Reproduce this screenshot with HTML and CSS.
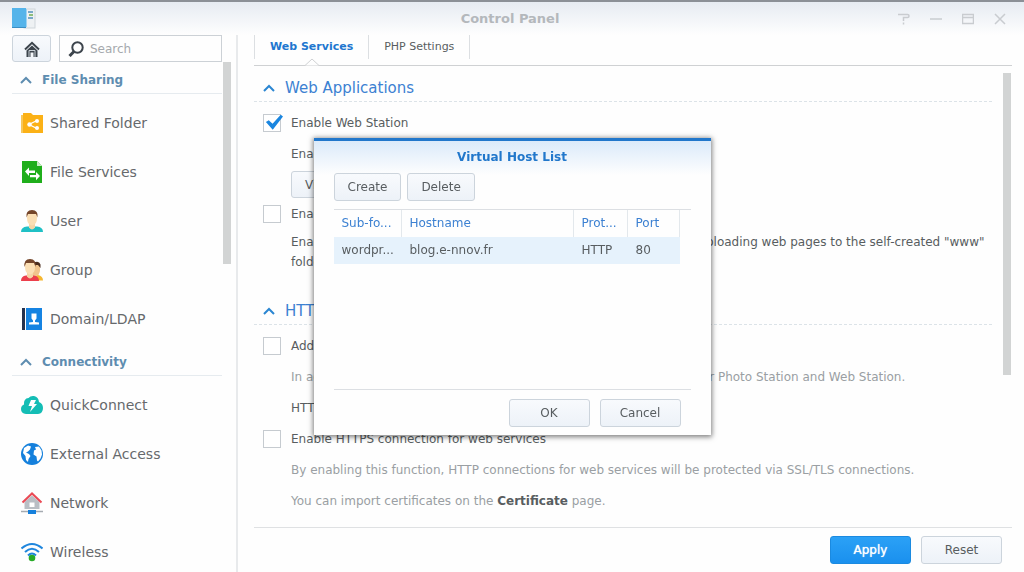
FILE: index.html
```html
<!doctype html>
<html lang="en">
<head>
<meta charset="utf-8">
<title>Control Panel</title>
<meta name="viewport" content="width=device-width, initial-scale=1">
<link rel="stylesheet" href="styles.css">
</head>
<body>

<header class="titlebar">
  <svg class="app-icon" width="24" height="22" viewBox="0 0 24 22">
    <rect x="12" y="1" width="11" height="19" fill="#eef1f3" stroke="#cfd5da"/>
    <rect x="0" y="0" width="14" height="20" fill="#55b4ea"/>
    <path d="M0 19.500h14" stroke="#3b8fc4"/>
    <path d="M14.500 1v18" stroke="#9fd3f2"/>
    <path d="M16 4h5M16 10h5" stroke="#7aa9c9" stroke-width="2"/>
    <path d="M17 7h4" stroke="#8fbf7a" stroke-width="2"/>
  </svg>
  <h1>Control Panel</h1>
  <div class="window-buttons">
    <button aria-label="Help"><svg width="12" height="12" viewBox="0 0 12 12"><path d="M0 1.500h9.500q1.500 0 1.500 1.500t-1.500 1.500H5.500V8M5.500 9.500v2"/></svg></button>
    <button aria-label="Minimize"><svg width="12" height="12" viewBox="0 0 12 12"><path d="M0 6h12"/></svg></button>
    <button aria-label="Maximize"><svg width="12" height="12" viewBox="0 0 12 12"><path d="M0 1.500h12M.5 1v9.500h11V1M1 4.500h10"/></svg></button>
    <button aria-label="Close"><svg width="12" height="12" viewBox="0 0 12 12"><path d="M1 1l10 10M11 1L1 11"/></svg></button>
  </div>
</header>

<div class="window">
  <aside class="sidebar">
    <div class="search-row">
      <button class="btn home" aria-label="Home">
        <svg width="16" height="16" viewBox="0 0 16 16">
          <path d="M1 8.500L8 1.800l7 6.700" fill="none" stroke="#3c444c" stroke-width="2"/>
          <path d="M2.500 9.500L8 4.500l5.500 5V16h-11z" fill="#3c444c"/>
          <path d="M5 16V9.500h6V16" fill="none" stroke="#c9d0d6"/>
          <path d="M6.500 16v-4.500h3V16z" fill="#f4f7fa"/>
        </svg>
      </button>
      <label class="search">
        <svg width="16" height="16" viewBox="0 0 16 16"><circle cx="9.500" cy="6.500" r="5.200" fill="none" stroke="#3c444c" stroke-width="2"/><path d="M6 10.500l-4.500 4.500" stroke="#3c444c" stroke-width="3"/></svg>
        <input type="text" placeholder="Search" aria-label="Search">
      </label>
    </div>

    <nav>
      <h2><svg class="chevron" width="12" height="8" viewBox="0 0 12 8"><path d="M1 7l5-5 5 5"/></svg>File Sharing</h2>
      <ul>
        <li><a href="#">
          <svg width="22" height="22" viewBox="0 0 22 22"><path d="M0 3h2v18H0z" fill="#f7c75b"/><path d="M2 1h8l2 2h10v18H2z" fill="#fbb116"/><path d="M16 8.500l-8 4 8 4" fill="none" stroke="#fff" stroke-width="1.300"/><circle cx="8.500" cy="12.500" r="2.200" fill="#fff"/><circle cx="16" cy="9" r="2" fill="#fff"/><circle cx="16" cy="16" r="2" fill="#fff"/></svg>
          Shared Folder</a></li>
        <li><a href="#">
          <svg width="22" height="22" viewBox="0 0 22 22"><path d="M1 0h15l5 5v17H1z" fill="#1fae1b"/><path d="M16 0v5h5z" fill="#c9edc6"/><path d="M4 10.500l4-4v3h6v2.500H8v3zM19 15l-4-4v3h-6v2.300h6v3z" fill="#fff"/></svg>
          File Services</a></li>
        <li><a href="#">
          <svg width="22" height="22" viewBox="0 0 22 22"><path d="M0 22q0-5 6-5.500h10q6 .5 6 5.500z" fill="#1fc0c5"/><path d="M8 13h6v4.500q-3 4-6 0z" fill="#f5d5a6"/><path d="M6 3h10v5q0 7-5 7.500-5-.5-5-7.500z" fill="#fbdfb4"/><path d="M5.500 7.500Q4.500 0 11 0t5.500 7.500L15 4H7z" fill="#75462a"/></svg>
          User</a></li>
        <li><a href="#">
          <svg width="22" height="22" viewBox="0 0 22 22"><path d="M13 21.500V17l4-1q5 1 5 5.500z" fill="#f5b731"/><path d="M12 6h7v6q-1 4-3 4.500L12 17z" fill="#f0c48c"/><path d="M12 4q6-3 7.500 1.500V9L17 6h-4z" fill="#4a2d1d"/><path d="M0 22q0-5 5-5.500h8q5 .5 5 5.500z" fill="#ec3f4c"/><path d="M6 13h6v4.500q-3 4-6 0z" fill="#f5d5a6"/><path d="M4 3h10v5q0 7-5 7.500-5-.5-5-7.500z" fill="#fbdfb4"/><path d="M3.500 8Q2.500 0 9 0t5.500 8L13 4H5z" fill="#75462a"/></svg>
          Group</a></li>
        <li><a href="#">
          <svg width="22" height="22" viewBox="0 0 22 22"><path d="M1 0h3v22H1z" fill="#25324e"/><path d="M5 0h16v22H5z" fill="#1583e2"/><path d="M10.500 5.500h5v5l-1.500 2v1.500l4 .5v2H8v-2l4-.5v-1.500l-1.500-2z" fill="#fff"/></svg>
          Domain/LDAP</a></li>
      </ul>
      <h2><svg class="chevron" width="12" height="8" viewBox="0 0 12 8"><path d="M1 7l5-5 5 5"/></svg>Connectivity</h2>
      <ul>
        <li><a href="#">
          <svg width="22" height="22" viewBox="0 0 22 22"><path d="M5 20q-5-.5-5-5 0-3.500 3-4.500-.500-6 4.500-6.500Q9.500 1.500 13 2q4.500 1 5 6 4 1.500 4 6 0 5.500-5 6z" fill="#14bdb5"/><path d="M10 6h5l-2 4h3l-7 8 2-6H7.500z" fill="#fff"/></svg>
          QuickConnect</a></li>
        <li><a href="#">
          <svg width="22" height="22" viewBox="0 0 22 22"><circle cx="11" cy="11" r="11" fill="#1580dc"/><path d="M3 5l4-2.500 3 1-1 3-2 2-2 1 3 1.500 1.500 2-2 3-.500 3-2-2-.500-4-2.500-3zM14 4l4-.5 2.500 4 .5 4-1.500 4-2.500 3-1-1-.5-4-3-2 .5-4 2-1z" fill="#fff"/></svg>
          External Access</a></li>
        <li><a href="#">
          <svg width="22" height="22" viewBox="0 0 22 22"><path d="M3.500 10L11 3.500l7.500 6.500v7h-15z" fill="#b9bec4"/><path d="M8.500 10.500h5v4.500h-5z" fill="#fff"/><path d="M1.500 10.500L11 1.500l9.500 9" fill="none" stroke="#ea4a55" stroke-width="2"/><path d="M0 19.500h22" stroke="#a5abb1" stroke-width="1.500"/><path d="M7 18h8v4H7z" fill="#1580dc"/></svg>
          Network</a></li>
        <li><a href="#">
          <svg width="22" height="22" viewBox="0 0 22 22"><g fill="none" stroke="#1f86dd" stroke-width="2"><path d="M.5 7.500Q11-1.500 21.500 7.500"/><path d="M4 11q7-6.500 14 0"/><path d="M7 14.500q4-4 8 0"/></g><circle cx="11" cy="17" r="3.300" fill="#27ab27"/></svg>
          Wireless</a></li>
      </ul>
    </nav>
    <div class="thumb"></div>
  </aside>

  <main>
    <div class="tabs" role="tablist">
      <button class="tab active" role="tab" aria-selected="true">Web Services
        <svg class="notch" width="14" height="8" viewBox="0 0 14 8"><path d="M0 7.500L7 1l7 6.500"/></svg>
      </button>
      <button class="tab" role="tab" aria-selected="false">PHP Settings</button>
    </div>

    <div class="content">
      <section>
        <h2><svg class="chevron" width="12" height="8" viewBox="0 0 12 8"><path d="M1 7l5-5 5 5"/></svg>Web Applications</h2>
        <label class="row"><input type="checkbox" checked>Enable Web Station</label>
        <p class="row indent">Enable virtual host to host multiple websites.</p>
        <button class="btn vhost">Virtual Host</button>
        <label class="row"><input type="checkbox">Enable personal website</label>
        <p class="para indent">Enable this option to allow users to host their personal websites by uploading web pages to the self-created "www" folder.</p>
      </section>

      <section>
        <h2><svg class="chevron" width="12" height="8" viewBox="0 0 12 8"><path d="M1 7l5-5 5 5"/></svg>HTTP service options</h2>
        <label class="row"><input type="checkbox">Add an additional HTTP port</label>
        <p class="row indent muted">In addition to port 80, another alternative port can be opened here for Photo Station and Web Station.</p>
        <p class="row indent">HTTP port number:</p>
        <label class="row"><input type="checkbox">Enable HTTPS connection for web services</label>
        <p class="row indent muted">By enabling this function, HTTP connections for web services will be protected via SSL/TLS connections.</p>
        <p class="row indent muted">You can import certificates on the&nbsp;<b>Certificate</b>&nbsp;page.</p>
      </section>
      <div class="thumb"></div>
    </div>

    <footer>
      <button class="btn primary">Apply</button>
      <button class="btn wide">Reset</button>
    </footer>
  </main>
</div>

<div class="overlay">
  <div class="dialog" role="dialog" aria-labelledby="dialogTitle">
    <h2 id="dialogTitle">Virtual Host List</h2>
    <div class="toolbar">
      <button class="btn">Create</button>
      <button class="btn">Delete</button>
    </div>
    <div class="grid">
      <table>
        <colgroup><col class="c-folder"><col><col class="c-proto"><col class="c-port"><col class="c-end"></colgroup>
        <thead>
          <tr><th>Sub-fo...</th><th>Hostname</th><th>Prot...</th><th>Port</th><th></th></tr>
        </thead>
        <tbody>
          <tr><td>wordpr...</td><td>blog.e-nnov.fr</td><td>HTTP</td><td>80</td><td></td></tr>
        </tbody>
      </table>
    </div>
    <div class="actions">
      <button class="btn wide">OK</button>
      <button class="btn wide">Cancel</button>
    </div>
  </div>
</div>

</body>
</html>
```
FILE: styles.css
```css
* {
  box-sizing: border-box;
}
body {
  margin: 0;
  height: 100vh;
  display: flex;
  flex-direction: column;
  overflow: hidden;
  font: 12px/20px "DejaVu Sans", Verdana, sans-serif;
  color: #585d60;
  background: #fefefe;
}
h1, h2, p, ul {
  margin: 0;
  padding: 0;
}
button, input {
  font: inherit;
  color: inherit;
}
.titlebar {
  display: grid;
  grid-template-columns: 1fr auto 1fr;
  align-items: center;
  flex: none;
  height: 35px;
  padding: 0 16px 0 12px;
  border-top: 2px solid #8b9097;
  background: linear-gradient(#e6ebf2, #fefefe);
}
.titlebar h1 {
  font-size: 13px;
  color: #b4b8bc;
}
.window-buttons {
  display: flex;
  justify-content: flex-end;
  gap: 16px;
}
.window-buttons button {
  display: flex;
  width: 16px;
  padding: 2px;
  border: 0;
  background: none;
}
.window-buttons path {
  fill: none;
  stroke: #c9ccd0;
  stroke-width: 1.500;
}
.window {
  display: flex;
  flex: 1;
  min-height: 0;
}

/* buttons */
.btn {
  height: 28px;
  padding: 0 13px;
  border: 1px solid #ccd4dc;
  border-radius: 3px;
  background: linear-gradient(#f8fafd, #edf2f8);
}
.wide, .primary {
  width: 81px;
  padding: 0;
}
.primary {
  border-color: #1b8ae0;
  background: linear-gradient(#2ba1f6, #1a90ee);
  color: #fff;
  text-shadow: 0 0 1px #fff;
}

/* sidebar */
.sidebar {
  position: relative;
  flex: none;
  width: 238px;
  padding: 0 14px 0 12px;
  border-right: 2px solid #e8eaec;
  overflow: hidden;
}
.search-row {
  display: flex;
  gap: 8px;
}
.home {
  display: flex;
  align-items: center;
  justify-content: center;
  width: 39px;
  height: 27px;
  padding: 0;
}
.search {
  display: flex;
  flex: 1;
  align-items: center;
  gap: 6px;
  height: 27px;
  padding-left: 8px;
  border: 1px solid #ccd1d6;
}
.search svg {
  flex: none;
}
.search input {
  width: 100%;
  min-width: 0;
  padding: 0;
  border: 0;
  background: none;
  outline: none;
}
.search input::placeholder {
  color: #a5a9ad;
}
.chevron {
  flex: none;
}
.chevron path, .notch path {
  fill: none;
  stroke: currentColor;
  stroke-width: 2;
}
.sidebar h2 {
  display: flex;
  align-items: center;
  gap: 10px;
  height: 32px;
  padding: 4px 0 0 8px;
  border-bottom: 1px solid #e6ebef;
  font-size: 12px;
  color: #5e8db0;
}
.sidebar ul {
  padding: 4px 0 1px;
  list-style: none;
}
.sidebar a {
  display: flex;
  align-items: center;
  gap: 7px;
  height: 49px;
  padding-left: 9px;
  font-size: 14px;
  color: #66696c;
  text-decoration: none;
}
.thumb {
  position: absolute;
  width: 8px;
  background: #d2d4d4;
}
.sidebar .thumb {
  top: 27px;
  right: 5px;
  height: 202px;
}

/* main */
main {
  display: flex;
  flex: 1;
  flex-direction: column;
  min-width: 0;
  padding: 0 12px 0 16px;
}
.tabs {
  display: flex;
  flex: none;
  height: 31px;
  padding-bottom: 6px;
  border-bottom: 1px solid #cfd1d3;
}
.tab {
  position: relative;
  padding: 0 15px;
  border: 0;
  border-right: 1px solid #dcdfe2;
  background: none;
  font-size: 11px;
}
.tab:first-child {
  border-left: 1px solid #dcdfe2;
}
.tab.active {
  font-weight: bold;
  color: #2176cf;
}
.notch {
  position: absolute;
  bottom: -7px;
  left: 50%;
  margin-left: -7px;
}
.notch path {
  fill: #fefefe;
  stroke: #cfd1d3;
  stroke-width: 1;
}
.content {
  position: relative;
  flex: 1;
  min-height: 0;
  padding: 8px 20px 0 0;
  overflow: hidden;
}
.content .thumb {
  top: 7px;
  right: 1px;
  height: 302px;
}
.content h2 {
  display: flex;
  align-items: center;
  gap: 10px;
  height: 28px;
  margin-bottom: 5px;
  padding-left: 9px;
  border-bottom: 1px dashed #dce3e8;
  font-size: 15px;
  font-weight: normal;
  color: #3c81d2;
}
.content .chevron path {
  stroke: #2b86d2;
}
section + section {
  margin-top: 25px;
}
.row {
  display: flex;
  align-items: center;
  height: 31px;
  padding-left: 9px;
  white-space: nowrap;
}
.content input {
  appearance: none;
  width: 18px;
  height: 18px;
  margin: 0 10px 0 0;
  border: 1px solid #c6cbd0;
  background: #fff;
}
.content input:checked {
  position: relative;
}
.content input:checked::after {
  content: "";
  position: absolute;
  inset: -1px -3px 0 0;
  background: #1a86e0;
  clip-path: polygon(10% 50%, 25% 40%, 45% 60%, 88% 8%, 100% 18%, 46% 96%);
}
.indent {
  padding-left: 37px;
}
.para {
  padding-top: 3px;
}
.muted {
  color: #9a9fa3;
}
.muted b {
  color: #585d60;
}
.vhost {
  display: block;
  height: 27px;
  margin: 2px 0 0 37px;
}
footer {
  display: flex;
  flex: none;
  justify-content: flex-end;
  gap: 10px;
  padding: 8px 10px;
  border-top: 1px solid #dfe1e3;
}

/* virtual host dialog */
.overlay {
  position: fixed;
  inset: 0;
  display: flex;
  align-items: center;
  justify-content: center;
}
.dialog {
  width: 397px;
  padding: 0 20px 8px;
  border-top: 3px solid #2177cb;
  background: linear-gradient(#dbeafa, #fefefe 34px);
  box-shadow: 0 1px 5px 1px rgba(0, 0, 0, 0.5);
}
.dialog h2 {
  padding: 6px 0;
  font-size: 12px;
  text-align: center;
  color: #2177cb;
}
.toolbar {
  display: flex;
  gap: 6px;
}
.grid {
  height: 181px;
  margin: 8px 0 9px;
  border-top: 1px solid #dcdfe3;
  border-bottom: 1px solid #dcdfe3;
}
table {
  width: 100%;
  table-layout: fixed;
  border-collapse: separate;
  border-spacing: 0;
}
.c-folder {
  width: 68px;
}
.c-proto {
  width: 54px;
}
.c-port {
  width: 52px;
}
.c-end {
  width: 11px;
}
th, td {
  height: 27px;
  padding: 0 0 0 8px;
  text-align: left;
  white-space: nowrap;
}
th {
  border-right: 1px solid #e3e8ec;
  font-weight: normal;
  color: #3c81d2;
}
td {
  background: #e6f2fc;
}
th:last-child, td:last-child {
  padding: 0;
  border-right: 0;
  background: none;
}
.actions {
  display: flex;
  justify-content: flex-end;
  gap: 10px;
  padding-right: 10px;
}
```
